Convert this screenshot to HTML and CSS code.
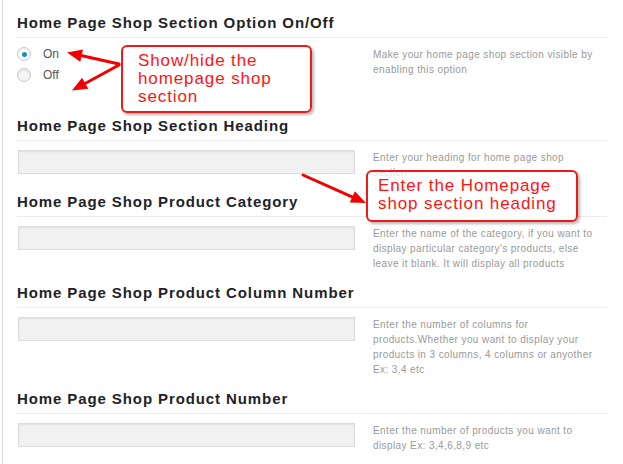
FILE: index.html
```html
<!DOCTYPE html>
<html lang="en">

<head>
    <meta charset="UTF-8">
    <meta name="viewport" content="width=device-width, initial-scale=1.0">
    <title>Home Page Shop options</title>
    <link rel="stylesheet" href="styles.css">
</head>

<body>
    <div class="panel">
        <section class="option option-toggle">
            <h3 class="option-title">Home Page Shop Section Option On/Off</h3>
            <div class="option-row">
                <div class="option-field">
                    <label class="radio-line"><span class="radio is-checked"></span>On</label>
                    <label class="radio-line"><span class="radio"></span>Off</label>
                </div>
                <p class="option-desc">Make your home page shop section visible by enabling this option</p>
            </div>
        </section>

        <section class="option">
            <h3 class="option-title">Home Page Shop Section Heading</h3>
            <div class="option-row">
                <input type="text" class="text-input">
                <p class="option-desc">Enter your heading for home page shop section</p>
            </div>
        </section>

        <section class="option">
            <h3 class="option-title">Home Page Shop Product Category</h3>
            <div class="option-row">
                <input type="text" class="text-input">
                <p class="option-desc">Enter the name of the category, if you want to display particular category's products, else leave it blank. It will display all products</p>
            </div>
        </section>

        <section class="option">
            <h3 class="option-title">Home Page Shop Product Column Number</h3>
            <div class="option-row">
                <input type="text" class="text-input">
                <p class="option-desc">Enter the number of columns for products.Whether you want to display your products in 3 columns, 4 columns or anyother Ex: 3,4 etc</p>
            </div>
        </section>

        <section class="option">
            <h3 class="option-title">Home Page Shop Product Number</h3>
            <div class="option-row">
                <input type="text" class="text-input">
                <p class="option-desc">Enter the number of products you want to display Ex: 3,4,6,8,9 etc</p>
            </div>
        </section>
    </div>

    <!-- annotations on top of the screenshot -->
    <div class="note note-toggle">Show/hide the<br>homepage shop<br>section</div>
    <div class="note note-heading">Enter the Homepage<br>shop section heading</div>

    <svg class="arrows" width="623" height="464" viewBox="0 0 623 464">
        <g stroke="#f20000" stroke-width="3" stroke-linecap="round">
            <line x1="119" y1="64" x2="82" y2="55.8" />
            <line x1="119" y1="65" x2="85.5" y2="83.2" />
            <line x1="303" y1="175" x2="352" y2="196.8" />
        </g>
        <g fill="#f20000">
            <polygon points="67,52.5 82.9,49.6 80.3,61.8" />
            <polygon points="72,90.5 88.3,88.8 82.1,77.8" />
            <polygon points="366,203 349.7,202.6 354.9,191.2" />
        </g>
    </svg>
</body>

</html>
```

FILE: styles.css
```css
body {
    margin: 0;
    position: relative;
    width: 623px;
    height: 464px;
    overflow: hidden;
    background: #fff;
    font-family: "Liberation Sans", Arial, sans-serif;
}

/* settings panel with the grey rule on the left */
.panel {
    margin-left: 2px;
    border-left: 1px solid #dcdcdc;
    padding: 14px 0 0 14px;
    width: 590px;
    min-height: 450px;
}

.option {
    margin-bottom: 13px;
}

.option-title {
    margin: 0;
    padding-bottom: 5px;
    border-bottom: 1px solid #ececec;
    font-size: 15px;
    line-height: 18px;
    letter-spacing: 0.9px;
    font-weight: bold;
    color: #1d2327;
}

.option-row {
    display: flex;
    align-items: flex-start;
    gap: 19px;
    margin-top: 9px;
}

.option-toggle .option-row {
    min-height: 57px;
}

.option-field {
    width: 337px;
    flex: none;
}

.option-desc {
    margin: 0;
    width: 226px;
    font-size: 10px;
    line-height: 15px;
    letter-spacing: 0.4px;
    color: #999;
}

.text-input {
    flex: none;
    width: 337px;
    height: 24px;
    margin: 0 0 0 1px;
    box-sizing: border-box;
    background: #f1f1f1;
    border: 1px solid #dcdcdc;
    box-shadow: inset 0 1px 2px rgba(0, 0, 0, 0.07);
}

.text-input + .option-desc {
    margin-left: -1px;
}

.radio-line {
    display: flex;
    align-items: center;
    gap: 12px;
    height: 14px;
    margin: 0 0 7px 0;
    font-size: 12px;
    color: #555;
}

.radio {
    width: 14px;
    height: 14px;
    box-sizing: border-box;
    border-radius: 50%;
    border: 1px solid #c3c7cb;
    background: #f5f5f5;
    box-shadow: inset 0 1px 2px rgba(0, 0, 0, 0.1);
    display: flex;
    align-items: center;
    justify-content: center;
}

.radio.is-checked {
    background: #fff;
}

.radio.is-checked::before {
    content: "";
    width: 5px;
    height: 5px;
    border-radius: 50%;
    background: #1e8cbe;
}

/* red callouts */
.note {
    position: absolute;
    box-sizing: border-box;
    border: 2px solid #f01818;
    border-radius: 6px;
    background: rgba(255, 255, 255, 0.7);
    box-shadow: 2px 2px 3px rgba(0, 0, 0, 0.28);
    padding-top: 5px;
    font-size: 17px;
    line-height: 18px;
    letter-spacing: 0.9px;
    color: #ff1414;
}

.note-toggle {
    left: 121px;
    top: 45px;
    width: 191px;
    height: 68px;
    padding-left: 15px;
}

.note-heading {
    left: 366px;
    top: 170px;
    width: 212px;
    height: 52px;
    padding-left: 10px;
}

.arrows {
    position: absolute;
    left: 0;
    top: 0;
    pointer-events: none;
}
```
